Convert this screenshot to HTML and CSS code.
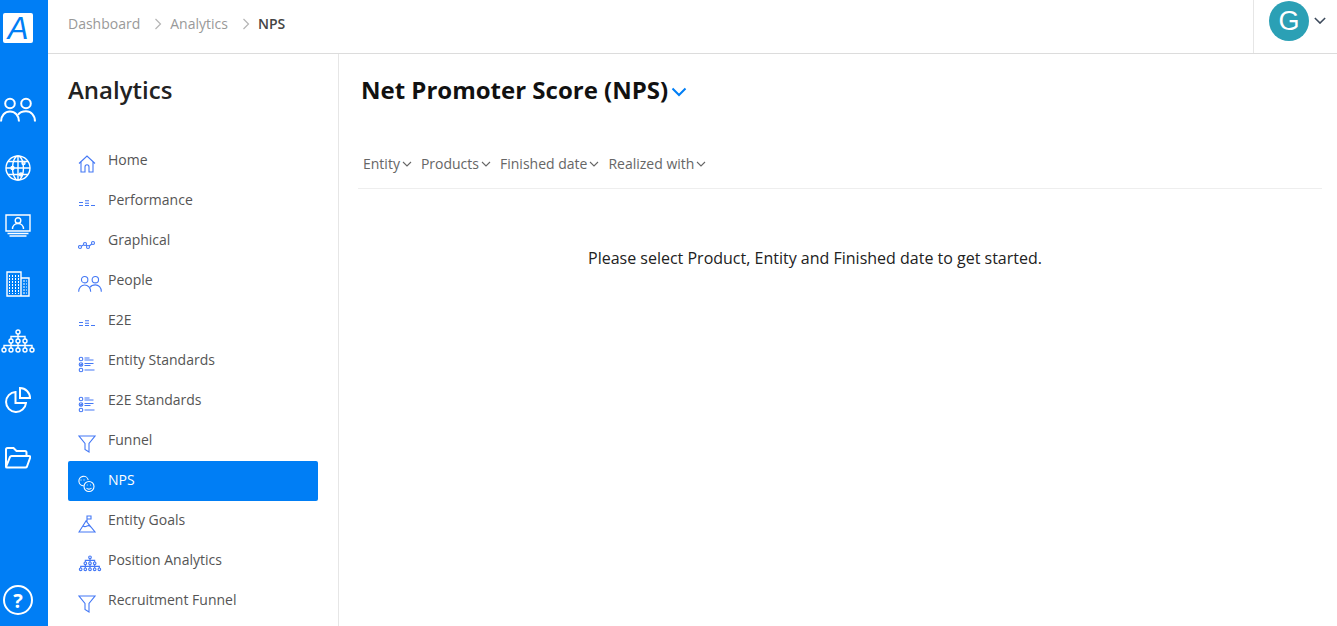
FILE: index.html
```html
<!DOCTYPE html>
<html lang="en">
<head>
  <meta charset="UTF-8" />
  <meta name="viewport" content="width=device-width, initial-scale=1" />
  <title>Analytics - NPS</title>
  <link rel="stylesheet" href="styles.css">
</head>
<body>
  <svg class="icon-defs" width="0" height="0">
    <defs>
      <symbol id="i-people" viewBox="0 0 36 26">
        <circle cx="10" cy="6.500" r="4.800" />
        <circle cx="26" cy="6.500" r="4.800" />
        <path d="M1 24.500c0-6 4-10 9-10s9 4 9 10" />
        <path d="M18 18c1.500-2.300 4.500-3.700 8-3.700 5 0 9 4 9 10.200" />
      </symbol>
      <symbol id="i-bars" viewBox="0 0 18 8">
        <path d="M1 2.500h4M1 5.500h4M7 .7h4M7 3.200h4M7 5.500h4M13 5.500h4" />
      </symbol>
      <symbol id="i-checks" viewBox="0 0 18 18">
        <circle cx="3" cy="4" r="1.800" />
        <circle cx="3" cy="9.500" r="1.800" />
        <path d="M2 9.500l1 1 1.200-2" />
        <circle cx="3" cy="15" r="1.800" />
        <path d="M6.500 3h5M6.500 5h9M6.500 8.500h9M6.500 10.500h6M6.500 15h10" />
      </symbol>
      <symbol id="i-funnel" viewBox="0 0 18 18">
        <path d="M1 1h16l-6 7.500v8.500l-4-2.500v-6z" />
      </symbol>
      <symbol id="i-tree" viewBox="0 0 36 26">
        <circle cx="18" cy="3" r="2" />
        <circle cx="11" cy="12" r="2" />
        <circle cx="18" cy="12" r="2" />
        <circle cx="25" cy="12" r="2" />
        <circle cx="4" cy="21" r="2" />
        <circle cx="11" cy="21" r="2" />
        <circle cx="18" cy="21" r="2" />
        <circle cx="25" cy="21" r="2" />
        <circle cx="32" cy="21" r="2" />
        <path d="M18 5v5M11 10V7.500h14V10M11 14v5M18 14v5M25 14v5M4 19v-2.500h28V19" />
      </symbol>
    </defs>
  </svg>

  <div class="app">
    <aside class="rail">
      <div class="rail-logo"><span>A</span></div>
      <nav class="rail-nav">
        <a class="rail-item" href="#"><svg class="rail-icon" width="36" height="26"><use href="#i-people" /></svg></a>
        <a class="rail-item" href="#">
          <svg class="rail-icon rail-icon-thin" width="26" height="26" viewBox="0 0 26 26">
            <circle cx="13" cy="13" r="12" />
            <ellipse cx="13" cy="13" rx="5.500" ry="12" />
            <path d="M1 13h24M3 6.500h20M3 19.500h20M13 1v24" />
            <circle cx="7.500" cy="13" r="1.500" />
            <circle cx="18.500" cy="8" r="1.500" />
            <circle cx="16" cy="19.500" r="1.500" />
          </svg>
        </a>
        <a class="rail-item" href="#">
          <svg class="rail-icon rail-icon-thin" width="26" height="24" viewBox="0 0 26 24">
            <path d="M1 1h24v16H1z" />
            <circle cx="13" cy="6.500" r="2.800" />
            <path d="M7.500 15c0-3.500 2.500-5.500 5.500-5.500s5.500 2 5.500 5.500M2.500 19.500h21M4.500 22h17" />
          </svg>
        </a>
        <a class="rail-item" href="#">
          <svg class="rail-icon rail-icon-thin" width="24" height="26" viewBox="0 0 24 26">
            <path d="M1 1h14v24H1zM15 7h8v18h-8z" />
            <path class="rail-dash" d="M3.500 4v19M6.500 4v19M9.500 4v19M12.500 4v19M17 10h4M17 13h4M17 16h4M17 19h4M17 22h4" />
          </svg>
        </a>
        <a class="rail-item" href="#"><svg class="rail-icon rail-icon-thin" width="36" height="26"><use href="#i-tree" /></svg></a>
        <a class="rail-item" href="#">
          <svg class="rail-icon" width="26" height="26" viewBox="0 0 26 26">
            <path d="M10.500 5A10 10 0 1 0 21 16H10.500z" />
            <path d="M15 1a10 10 0 0 1 10 10H15z" />
          </svg>
        </a>
        <a class="rail-item" href="#">
          <svg class="rail-icon" width="26" height="22" viewBox="0 0 26 22">
            <path d="M1 20V2.500C1 1.500 1.500 1 2.500 1h6l3 3h8.500c1 0 1.500.500 1.500 1.500V9" />
            <path d="M1 20l4-10c.300-.700.800-1 1.500-1H24c1 0 1.500.700 1.200 1.500L22 19.500c-.300.700-.800 1-1.500 1H2c-.700 0-1-.200-1-.500z" />
          </svg>
        </a>
      </nav>
      <a class="rail-help" href="#">?</a>
    </aside>

    <div class="content">
      <header class="topbar">
        <ol class="crumbs">
          <li class="crumb"><a href="#">Dashboard</a></li>
          <li class="crumb-sep"><svg width="8" height="12" viewBox="0 0 8 12"><path d="M1.500 1l5 5-5 5" /></svg></li>
          <li class="crumb"><a href="#">Analytics</a></li>
          <li class="crumb-sep"><svg width="8" height="12" viewBox="0 0 8 12"><path d="M1.500 1l5 5-5 5" /></svg></li>
          <li class="crumb crumb-current">NPS</li>
        </ol>
        <div class="user-box">
          <div class="avatar">G</div>
          <svg class="user-caret" width="12" height="7" viewBox="0 0 14 8"><path d="M1 1l6 6 6-6" /></svg>
        </div>
      </header>

      <div class="body-row">
        <section class="side-panel">
          <h2 class="side-title">Analytics</h2>
          <ul class="menu">
            <li class="menu-item">
              <svg class="menu-icon" width="18" height="18" viewBox="0 0 18 18"><path d="M1 8.500L9 1l8 7.500M3 7v10h4v-5c0-3 4-3 4 0v5h4V7" /></svg>
              Home
            </li>
            <li class="menu-item">
              <svg class="menu-icon" width="18" height="18"><use href="#i-bars" y="5" height="8" /></svg>
              Performance
            </li>
            <li class="menu-item">
              <svg class="menu-icon" width="18" height="18" viewBox="0 0 18 18"><circle cx="2" cy="12" r="1.500" /><circle cx="7" cy="9" r="1.500" /><circle cx="10" cy="12" r="1.500" /><circle cx="15" cy="8" r="1.500" /><path d="M3.300 11.200l2.400-1.400M8 10.100l1 .800M11.200 11l2.600-2" /></svg>
              Graphical
            </li>
            <li class="menu-item">
              <svg class="menu-icon menu-icon-wide" width="24" height="18"><use href="#i-people" /></svg>
              People
            </li>
            <li class="menu-item">
              <svg class="menu-icon" width="18" height="18"><use href="#i-bars" y="5" height="8" /></svg>
              E2E
            </li>
            <li class="menu-item">
              <svg class="menu-icon" width="18" height="18"><use href="#i-checks" /></svg>
              Entity Standards
            </li>
            <li class="menu-item">
              <svg class="menu-icon" width="18" height="18"><use href="#i-checks" /></svg>
              E2E Standards
            </li>
            <li class="menu-item">
              <svg class="menu-icon" width="18" height="18"><use href="#i-funnel" /></svg>
              Funnel
            </li>
            <li class="menu-item menu-item-active">
              <svg class="menu-icon" width="18" height="18" viewBox="0 0 18 18"><path d="M5.800 10.700A4.700 4.700 0 1 1 10.200 5" /><circle cx="11" cy="11.500" r="5" /><path d="M2.500 5h1M5.500 5h1M8.800 10h.800M12.200 10h.800M8.500 13c1.200 1.500 3.800 1.500 5 0" /></svg>
              NPS
            </li>
            <li class="menu-item">
              <svg class="menu-icon" width="18" height="18" viewBox="0 0 18 18"><path d="M1 17L8 6l9 11zM9 7V1h4v3H9M5 11c1.500 1 2 1 4 0s3 0 4 1" /></svg>
              Entity Goals
            </li>
            <li class="menu-item">
              <svg class="menu-icon menu-icon-wide" width="24" height="17"><use href="#i-tree" /></svg>
              Position Analytics
            </li>
            <li class="menu-item">
              <svg class="menu-icon" width="18" height="18"><use href="#i-funnel" /></svg>
              Recruitment Funnel
            </li>
          </ul>
        </section>

        <main class="main">
          <div class="page-head">
            <h1 class="page-title">Net Promoter Score (NPS)</h1>
            <svg class="page-caret" width="16" height="10" viewBox="0 0 16 10"><path d="M1.500 1.500L8 8l6.500-6.500" /></svg>
          </div>
          <div class="filters">
            <div class="filter">Entity <svg width="10" height="6" viewBox="0 0 10 6"><path d="M1 1l4 4 4-4" /></svg></div>
            <div class="filter">Products <svg width="10" height="6" viewBox="0 0 10 6"><path d="M1 1l4 4 4-4" /></svg></div>
            <div class="filter">Finished date <svg width="10" height="6" viewBox="0 0 10 6"><path d="M1 1l4 4 4-4" /></svg></div>
            <div class="filter">Realized with <svg width="10" height="6" viewBox="0 0 10 6"><path d="M1 1l4 4 4-4" /></svg></div>
          </div>
          <p class="empty-msg">Please select Product, Entity and Finished date to get started.</p>
        </main>
      </div>
    </div>
  </div>
</body>
</html>
```

FILE: styles.css
```css
body {
  margin: 0;
  font-family: 'Open Sans', sans-serif;
  font-size: 14px;
  background: #fff;
  height: 100vh;
  overflow: hidden;
}

a {
  color: inherit;
  text-decoration: none;
}

svg {
  fill: none;
  display: block;
}

.icon-defs {
  position: absolute;
}

.icon-defs * {
  vector-effect: non-scaling-stroke;
}

.app {
  display: flex;
  height: 100%;
}

/* left blue rail */
.rail {
  width: 48px;
  flex-shrink: 0;
  box-sizing: border-box;
  padding-right: 12px;
  background: #007ef5;
  display: flex;
  flex-direction: column;
  align-items: center;
}

.rail-logo {
  width: 30px;
  height: 30px;
  flex-shrink: 0;
  margin-top: 13px;
  margin-bottom: 38px;
  background: #fff;
  border-radius: 2px;
  display: flex;
  align-items: center;
  justify-content: center;
  color: #007ef5;
  font-size: 31px;
  line-height: 1;
  font-style: italic;
  font-family: 'Liberation Sans', sans-serif;
}

.rail-nav {
  display: flex;
  flex-direction: column;
  align-items: center;
}

.rail-item {
  height: 58px;
  display: flex;
  align-items: center;
  justify-content: center;
}

.rail-icon {
  stroke: #fff;
  stroke-width: 2;
}

.rail-icon-thin {
  stroke-width: 1.400;
}

.rail-dash {
  stroke-width: 1;
  stroke-dasharray: 2 1;
}

.rail-help {
  margin-top: auto;
  margin-bottom: 11px;
  width: 26px;
  height: 26px;
  flex-shrink: 0;
  border: 2px solid #fff;
  border-radius: 50%;
  display: flex;
  align-items: center;
  justify-content: center;
  color: #fff;
  font-size: 20px;
  font-weight: 700;
}

.content {
  flex: 1;
  display: flex;
  flex-direction: column;
  min-width: 0;
}

/* top bar */
.topbar {
  height: 53px;
  flex-shrink: 0;
  border-bottom: 1px solid #dcdcdc;
  display: flex;
  justify-content: space-between;
  padding-left: 20px;
}

.crumbs {
  list-style: none;
  margin: 0;
  padding: 0 0 6px;
  display: flex;
  align-items: center;
}

.crumb {
  color: #999;
}

.crumb-current {
  color: #444;
  font-weight: 600;
}

.crumb-sep {
  margin: 0 8px 0 14px;
}

.crumb-sep path {
  stroke: #b5b5b5;
  stroke-width: 1.200;
}

.user-box {
  width: 84px;
  border-left: 1px solid #e6e6e6;
  display: flex;
  align-items: flex-start;
  padding-left: 15px;
  padding-top: 1px;
  box-sizing: border-box;
}

.avatar {
  width: 40px;
  height: 40px;
  border-radius: 50%;
  background: #2ba0b5;
  color: #fff;
  font-family: 'Liberation Sans', sans-serif;
  font-size: 27px;
  display: flex;
  align-items: center;
  justify-content: center;
  flex-shrink: 0;
}

.user-caret {
  margin: 16px 0 0 5px;
}

.user-caret path {
  stroke: #3d4a5c;
  stroke-width: 1.800;
}

.body-row {
  flex: 1;
  display: flex;
  min-height: 0;
}

/* analytics side panel */
.side-panel {
  width: 291px;
  flex-shrink: 0;
  box-sizing: border-box;
  border-right: 1px solid #e6e6e6;
  padding: 0 20px;
}

.side-title {
  margin: 19px 0 35px;
  font-size: 24px;
  line-height: 33px;
  font-weight: 600;
  color: #222;
}

.menu {
  list-style: none;
  margin: 0;
  padding: 0;
}

.menu-item {
  height: 40px;
  display: flex;
  align-items: center;
  padding-left: 10px;
  padding-bottom: 2px;
  box-sizing: border-box;
  border-radius: 2px;
  color: #555;
  line-height: 1;
}

.menu-icon {
  width: 18px;
  height: 18px;
  margin-right: 12px;
  position: relative;
  top: 4px;
  stroke: #4478f5;
  stroke-width: 1.100;
  flex-shrink: 0;
}

.menu-icon-wide {
  width: 24px;
  margin-right: 6px;
}

.menu-item-active {
  background: #007ef5;
  color: #fff;
}

.menu-item-active .menu-icon {
  stroke: #fff;
}

/* main area */
.main {
  flex: 1;
  min-width: 0;
  padding: 0 15px 0 19px;
}

.page-head {
  display: flex;
  align-items: center;
  margin: 19px 0 0 3px;
}

.page-title {
  margin: 0;
  font-size: 24px;
  line-height: 33px;
  font-weight: 700;
  color: #111;
}

.page-caret {
  margin: 4px 0 0 3px;
}

.page-caret path {
  stroke: #007ef5;
  stroke-width: 2;
}

.filters {
  display: flex;
  gap: 9px;
  margin-top: 48px;
  padding: 0 0 14px 5px;
  border-bottom: 1px solid #eee;
  color: #666;
  line-height: 20px;
}

.filter {
  display: flex;
  align-items: center;
  gap: 2px;
}

.filter path {
  stroke: #666;
  stroke-width: 1.100;
}

.empty-msg {
  margin: 58px 50px 0 0;
  text-align: center;
  font-size: 16px;
  color: #222;
}
```
